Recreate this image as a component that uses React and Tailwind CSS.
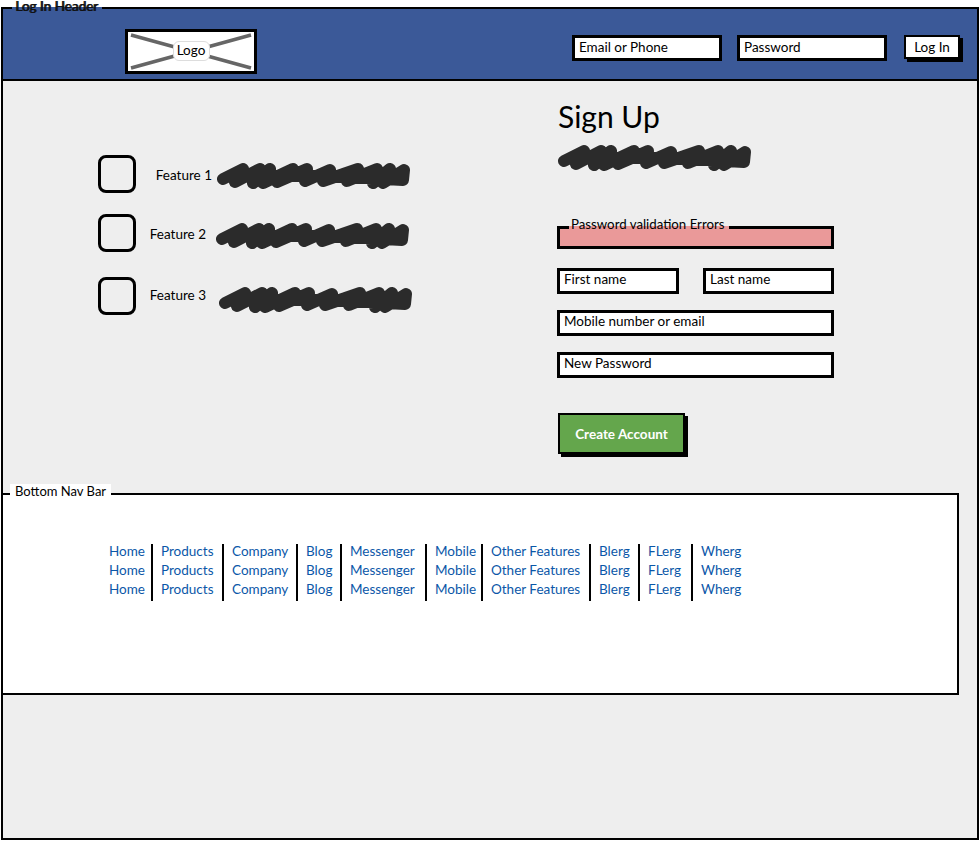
const font = { fontFamily: "Lato, sans-serif" };

const navItems = [
  ["Home", "w-[44px]"],
  ["Products", "w-[71px]"],
  ["Company", "w-[74px]"],
  ["Blog", "w-[44px]"],
  ["Messenger", "w-[85px]"],
  ["Mobile", "w-[56px]"],
  ["Other Features", "w-[108px]"],
  ["Blerg", "w-[49px]"],
  ["FLerg", "w-[53px]"],
  ["Wherg", "w-[60px]"],
];

function Scribble({ className }) {
  return (
    <svg viewBox="0 0 193 27" className={className} fill="none">
      <path
        d="M6 17L26 7L18 20L43 7L36 21L53 7L46 21L76 7L60 20L90 7L88 19L113 8L106 19L141 7L130 19L160 7L156 21L173 7L166 21L187 8L186 18L150 16L100 14L50 14"
        stroke="#2b2b2b"
        strokeWidth="12"
        strokeLinecap="round"
        strokeLinejoin="round"
      />
    </svg>
  );
}

function Field({ label, className }) {
  return (
    <div
      className={`h-[26px] bg-white border-[3px] border-black flex items-center pl-[4px] text-[13.5px] text-black ${className}`}
    >
      {label}
    </div>
  );
}

function Feature({ label, labelClass, className, scribbleClass }) {
  return (
    <div className={`flex items-center ${className}`}>
      <div className="w-[38px] h-[38px] border-[3px] border-black rounded-[8px]" />
      <span className={`text-[13.5px] text-black text-right ${labelClass}`}>{label}</span>
      <Scribble className={`w-[193px] h-[27px] ${scribbleClass}`} />
    </div>
  );
}

export default function App() {
  return (
    <div className="w-[980px] h-[841px] bg-white pt-[7px] pb-[1px] overflow-hidden" style={font}>
      <div className="relative h-full mx-[1px] border-2 border-black bg-[#eeeeee] flex flex-col">
        {/* header legend, gap in the frame line shows the header colour */}
        <div className="absolute left-[9px] -top-[2px] w-[90px] h-[2px] bg-[#3b5998]" />
        <span className="absolute left-[12px] -top-[8px] leading-[10px] text-[13.5px] text-[#111] [text-shadow:1px_0_0_#111]">
          Log In Header
        </span>

        {/* header */}
        <header className="h-[72px] shrink-0 bg-[#3b5998] border-b-2 border-black flex items-start">
          <div className="relative mt-[20px] ml-[122px] w-[132px] h-[45px] bg-white border-[3px] border-black flex items-center justify-center">
            <svg viewBox="0 0 126 39" className="absolute inset-0 w-full h-full">
              <path d="M3 3L123 36M123 3L3 36" stroke="#666666" strokeWidth="3.5" />
            </svg>
            <span className="relative mb-[2px] w-[37px] h-[20px] flex items-center justify-center bg-white border border-[#dddddd] rounded-[6px] text-[13.5px] text-black">
              Logo
            </span>
          </div>
          <Field label="Email or Phone" className="mt-[26px] ml-[315px] w-[150px] pb-[2px]" />
          <Field label="Password" className="mt-[26px] ml-[15px] w-[150px] pb-[2px]" />
          <button className="mt-[26px] ml-[17px] w-[56px] h-[24px] bg-white border-[2px] border-black shadow-[3px_3px_0_#000] text-[13.5px] text-black">
            Log In
          </button>
        </header>

        {/* main */}
        <main className="h-[412px] shrink-0 flex">
          <section className="w-[554px] shrink-0 pl-[95px] pt-[74px]">
            <Feature label="Feature 1" labelClass="w-[76px] mt-[2px]" scribbleClass="ml-[5px] mt-[3px]" />
            <Feature label="Feature 2" labelClass="w-[70px] mt-[2px]" className="mt-[21px]" scribbleClass="ml-[10px] mt-[5px]" />
            <Feature label="Feature 3" labelClass="w-[70px] -mt-[2px]" className="mt-[25px]" scribbleClass="ml-[13px] mt-[6px]" />
          </section>
          <section className="w-[277px] pt-[18px]">
            <h1 className="pl-[1px] text-[30px] leading-[34px] text-black">Sign Up</h1>
            <Scribble className="w-[195px] h-[27px] mt-[11px]" />
            <div className="relative mt-[55px] h-[23px] bg-[#ea9999] border-[3px] border-black">
              <div className="absolute left-[9px] -top-[3px] w-[160px] h-[3px] bg-[#ea9999]" />
              <span className="absolute left-[11px] -top-[12px] leading-[14px] text-[13.25px] text-black">
                Password validation Errors
              </span>
            </div>
            <div className="mt-[19px] flex justify-between">
              <Field label="First name" className="w-[122px] pb-[4px]" />
              <Field label="Last name" className="w-[131px] pb-[4px]" />
            </div>
            <Field label="Mobile number or email" className="mt-[16px] pb-[4px]" />
            <Field label="New Password" className="mt-[16px] pb-[4px]" />
            <button className="mt-[35px] ml-[1px] w-[127px] h-[41px] pt-[2px] bg-[#64a64c] border-2 border-black shadow-[3px_3px_0_#000] text-[13.5px] font-bold text-white">
              Create Account
            </button>
          </section>
        </main>

        {/* bottom nav */}
        <nav className="relative -ml-[2px] w-[958px] h-[202px] shrink-0 bg-white border-2 border-black pl-[106px] pt-[49px]">
          <span className="absolute left-[7px] -top-[11px] bg-white px-[5px] leading-[14px] text-[13px] text-black">
            Bottom Nav Bar
          </span>
          <div className="flex h-[57px] items-stretch">
            {navItems.map(([name, width], i) => (
              <div
                key={name}
                className={`${width} shrink-0 ${i ? "pl-[8px]" : ""} ${i < navItems.length - 1 ? "border-r-2 border-black" : ""} text-[13.5px] leading-[19px] text-[#0b57a8]`}
              >
                <div className="-mt-[2px]">{name}</div>
                <div>{name}</div>
                <div>{name}</div>
              </div>
            ))}
          </div>
        </nav>
      </div>
    </div>
  );
}
